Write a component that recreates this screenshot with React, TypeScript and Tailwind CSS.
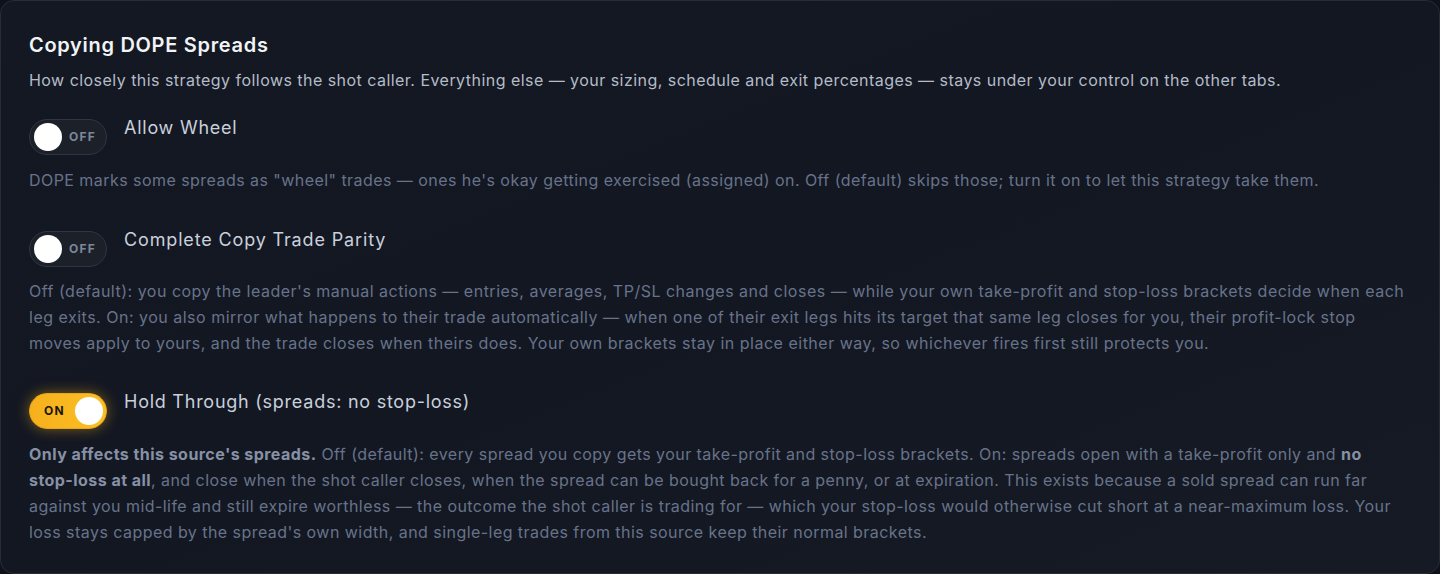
import React, { useState } from 'react';

type ToggleProps = {
    on: boolean;
    onChange: (v: boolean) => void;
};

const Toggle: React.FC<ToggleProps> = ({ on, onChange }) => {
    if (on) {
        return (
            <button
                onClick={() => onChange(false)}
                className="relative flex h-[36px] w-[78px] shrink-0 items-center rounded-full border border-[#e9a514] bg-gradient-to-r from-[#f6b01c] to-[#fbbf24] pl-[14px] shadow-[0_0_14px_rgba(245,180,30,0.45)]"
            >
                <span className="text-[12px] font-bold tracking-[0.1em] text-[#1a1405]">ON</span>
                <span className="absolute right-[3px] top-[3px] h-[28px] w-[28px] rounded-full bg-white" />
            </button>
        );
    }
    return (
        <button
            onClick={() => onChange(true)}
            className="relative flex h-[36px] w-[78px] shrink-0 items-center rounded-full border border-[#2f3542] bg-[#1b2029] pl-[39px]"
        >
            <span className="absolute left-[4px] top-[3px] h-[28px] w-[28px] rounded-full bg-white" />
            <span className="text-[12px] font-bold tracking-[0.1em] text-[#7d8799]">OFF</span>
        </button>
    );
};

const App: React.FC = () => {
    const [wheel, setWheel] = useState(false);
    const [parity, setParity] = useState(false);
    const [hold, setHold] = useState(true);

    return (
        <div
            className="h-[574px] w-[1440px] bg-[#0f121a]"
            style={{ fontFamily: 'Inter, "Noto Sans", sans-serif' }}
        >
            <div className="h-[574px] rounded-[14px] border border-[#272c37] bg-gradient-to-br from-[#141822] via-[#131722] to-[#151a24] px-[28px] pt-[30px]">
                <h2 className="text-[20px] font-semibold leading-[28px] tracking-[0.7px] text-[#f1f3f6]">Copying DOPE Spreads</h2>
                <p className="mt-[9px] text-[16px] leading-[24px] tracking-[0.46px] text-[#b4bcc8]">
                    How closely this strategy follows the shot caller. Everything else — your sizing, schedule and exit percentages — stays under your control on the other tabs.
                </p>

                {/* Allow Wheel */}
                <div className="mt-[27px]">
                    <div className="flex items-start gap-[17px]">
                        <Toggle on={wheel} onChange={setWheel} />
                        <span className="text-[18px] leading-[18px] tracking-[0.75px] text-[#c8d0dc]">Allow Wheel</span>
                    </div>
                    <p className="mt-[12px] text-[16px] leading-[26px] tracking-[0.45px] text-[#68738a]">
                        DOPE marks some spreads as "wheel" trades — ones he's okay getting exercised (assigned) on. Off (default) skips those; turn it on to let this strategy take them.
                    </p>
                </div>

                {/* Complete Copy Trade Parity */}
                <div className="mt-[38px]">
                    <div className="flex items-start gap-[17px]">
                        <Toggle on={parity} onChange={setParity} />
                        <span className="text-[18px] leading-[18px] tracking-[0.85px] text-[#c8d0dc]">Complete Copy Trade Parity</span>
                    </div>
                    <p className="mt-[11px] text-[16px] leading-[26px] tracking-[0.5px] text-[#68738a]">
                        Off (default): you copy the leader's manual actions — entries, averages, TP/SL changes and closes — while your own take-profit and stop-loss brackets decide when each leg exits. On: you also mirror what happens to their trade automatically — when one of their exit legs hits its target that same leg closes for you, their profit-lock stop moves apply to yours, and the trade closes when theirs does. Your own brackets stay in place either way, so whichever fires first still protects you.
                    </p>
                </div>

                {/* Hold Through */}
                <div className="mt-[37px]">
                    <div className="flex items-start gap-[17px]">
                        <Toggle on={hold} onChange={setHold} />
                        <span className="text-[18px] leading-[18px] tracking-[0.75px] text-[#c8d0dc]">Hold Through (spreads: no stop-loss)</span>
                    </div>
                    <p className="mt-[12px] text-[16px] leading-[26px] tracking-[0.45px] text-[#68738a]">
                        <strong className="font-bold text-[#8791a5]">Only affects this source's spreads.</strong> Off (default): every spread you copy gets your take-profit and stop-loss brackets. On: spreads open with a take-profit only and{' '}
                        <strong className="font-bold text-[#8791a5]">
                            no <span className="whitespace-nowrap">stop-loss</span> at all
                        </strong>
                        , and close when the shot caller closes, when the spread can be bought back for a penny, or at expiration. This exists because a sold spread can run far against you mid-life and still expire worthless — the outcome the shot caller is trading for — which your stop-loss would otherwise cut short at a near-maximum loss. Your loss stays capped by the spread's own width, and single-leg trades from this source keep their normal brackets.
                    </p>
                </div>
            </div>
        </div>
    );
};

export default App;
